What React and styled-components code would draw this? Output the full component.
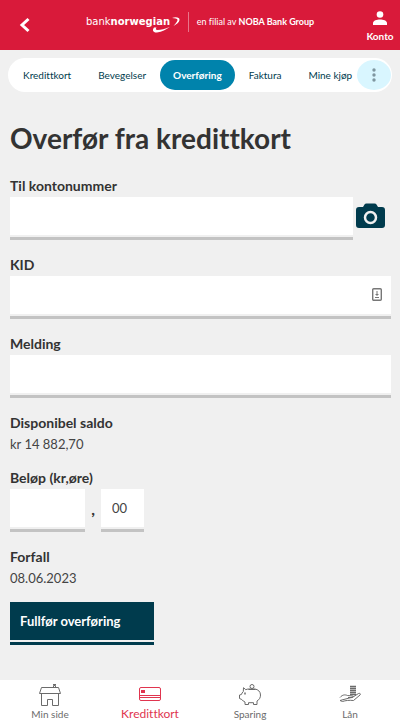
import React from "react";
import styled, { createGlobalStyle, ThemeProvider } from "styled-components";

const theme = {
  colorPrimary: "#d91a3a",
  colorNavy: "#003b4d",
  colorBlue: "#0083ac",
  colorLightBlue: "#d9f6ff",
  colorText: "#333333",
  colorGrey: "#c3c3c3",
  colorBackground: "#f0f0f0"
};

const GlobalStyle = createGlobalStyle`
  * {
    box-sizing: border-box;
  }
  body {
    margin: 0;
    background: ${theme.colorBackground};
    color: ${theme.colorText};
    font-family: Lato, "Noto Sans", sans-serif;
    font-variant-ligatures: none;
  }
  button,
  input {
    font-family: inherit;
    border: 0;
    border-radius: 0;
    margin: 0;
  }
`;

const Page = styled.div`
  min-height: 100vh;
  display: flex;
  flex-direction: column;
`;

const Header = styled.header`
  height: 50px;
  display: flex;
  align-items: center;
  justify-content: space-between;
  background: ${props => props.theme.colorPrimary};
  color: #fff;
`;

const BackButton = styled.button`
  width: 50px;
  height: 50px;
  padding: 0;
  display: flex;
  align-items: center;
  justify-content: center;
  background: none;
  color: inherit;
`;

const Brand = styled.a`
  display: flex;
  align-items: center;
  margin: 0 10px 6px 0;
  color: inherit;
  text-decoration: none;
`;

const Logo = styled.svg`
  display: block;
  width: 96px;
  height: 22px;
  font-family: "DejaVu Sans", sans-serif;
  font-size: 10px;
`;

const BrandNote = styled.span`
  padding: 4px 0 4px 8px;
  margin-left: 6px;
  border-left: 1px solid #e8758a;
  font-size: 9px;
  line-height: 12px;
  white-space: nowrap;
`;

const Account = styled.a`
  width: 40px;
  padding-top: 3px;
  display: flex;
  flex-direction: column;
  align-items: center;
  gap: 4px;
  color: inherit;
  font-size: 10px;
  font-weight: 700;
  line-height: 14px;
  text-decoration: none;
`;

const Tabs = styled.nav`
  margin: 8px 8px 0;
  padding: 2px 1px 2px 2px;
  display: flex;
  align-items: center;
  border-radius: 17px;
  background: #fff;
`;

const TabList = styled.div`
  flex: 1;
  min-width: 0;
  display: flex;
  gap: 1px;
  overflow: hidden;
`;

const Tab = styled.a`
  flex: none;
  height: 30px;
  padding: 0 13px;
  border-radius: 15px;
  background: ${props => (props.$active ? props.theme.colorBlue : "none")};
  color: ${props => (props.$active ? "#fff" : props.theme.colorNavy)};
  font-size: 10px;
  font-weight: ${props => (props.$active ? 700 : 400)};
  line-height: 30px;
  text-decoration: none;
  white-space: nowrap;
`;

const MoreButton = styled.button`
  flex: none;
  width: 34px;
  height: 30px;
  padding: 0;
  display: flex;
  align-items: center;
  justify-content: center;
  border-radius: 50%;
  background: ${props => props.theme.colorLightBlue};
  color: #7f96a0;
`;

const Content = styled.main`
  flex: 1;
  padding: 28px 9px 32px 10px;
`;

const Title = styled.h1`
  margin: 0 0 20px;
  font-size: 28px;
  font-weight: 700;
  line-height: 36px;
`;

const Field = styled.div`
  margin-bottom: ${props => (props.$compact ? "13px" : "15px")};
`;

const Label = styled.label`
  display: block;
  margin-bottom: 2px;
  font-size: 14px;
  font-weight: 700;
  line-height: 19px;
`;

const Value = styled.output`
  display: block;
  color: #444;
  font-size: 13px;
  line-height: 21px;
`;

const Row = styled.div`
  display: flex;
`;

const InputBox = styled.div`
  flex: ${props => (props.$width ? "none" : 1)};
  width: ${props => props.$width || "auto"};
  position: relative;
  padding-bottom: 2px;
  border-bottom: 3px solid ${props => props.theme.colorGrey};
`;

const Input = styled.input`
  display: block;
  width: 100%;
  height: 38px;
  padding: 0 11px;
  background: #fff;
  color: #444;
  font-size: 13px;
`;

const Autofill = styled.svg`
  position: absolute;
  right: 9px;
  top: 12px;
`;

const CameraButton = styled.button`
  width: 38px;
  padding: 6px 0 0 3px;
  display: flex;
  align-items: flex-start;
  background: none;
  color: ${props => props.theme.colorNavy};
`;

const Comma = styled.span`
  width: 16px;
  font-size: 16px;
  font-weight: 700;
  line-height: 40px;
  text-align: center;
`;

const SubmitFrame = styled.div`
  display: inline-block;
  padding-bottom: 2px;
  border-bottom: 3px solid ${props => props.theme.colorNavy};
`;

const Submit = styled.button`
  display: block;
  width: 144px;
  height: 38px;
  padding: 0 10px;
  background: ${props => props.theme.colorNavy};
  color: #fff;
  font-size: 13px;
  font-weight: 700;
  text-align: left;
`;

const BottomNav = styled.nav`
  height: 46px;
  display: grid;
  grid-template-columns: repeat(4, 1fr);
  background: #fff;
`;

const BottomLink = styled.a`
  padding-top: 3px;
  display: flex;
  flex-direction: column;
  align-items: center;
  color: ${props => (props.$active ? "#e0354f" : "#6b6b6b")};
  font-size: ${props => (props.$active ? "12px" : "10px")};
  line-height: 14px;
  text-decoration: none;

  svg {
    display: block;
  }
`;

const LineIcon = ({ children }) => (
  <svg
    width="24"
    height="24"
    viewBox="0 0 24 24"
    fill="none"
    stroke="currentColor"
    strokeLinejoin="round"
    aria-hidden="true"
  >
    {children}
  </svg>
);

const HouseIcon = () => (
  <LineIcon>
    <path d="M3.5 4.500H20.500L22.500 10.500H1.500ZM3.500 10.500V22.500H9.500V16.500H14.500V22.500H20.500V10.500M15.500 4.500V2.500H17.500V4.500" />
    <path d="M15 1.500H18" />
  </LineIcon>
);

const CardIcon = () => (
  <LineIcon>
    <rect x="1.500" y="4.500" width="21" height="13" rx="1.500" />
    <path d="M1.500 12.500H22.500M1.500 14.500H22.500" />
    <rect x="3" y="7" width="4" height="3" fill="currentColor" stroke="none" />
  </LineIcon>
);

const PigIcon = () => (
  <LineIcon>
    <path d="M11 6C9.500 6 8.700 6.200 7.800 6.700L5.500 4.700L5.300 8.500C4.200 9.500 3.700 10.500 3.400 11.500L1.500 12V15.500L3.800 16.500C4.500 17.700 5.800 18.500 7 19V21.500H10.500V19.700H15.500V21.500H19V18C21.500 16.500 22.500 14.500 22.500 12C22.500 8.500 20 6.500 17 6Z" />
    <path d="M10.500 6.500H17.500" />
    <circle cx="14" cy="3.500" r="2" />
    <path d="M7 9.500V11.500" strokeWidth="1.500" />
  </LineIcon>
);

const HandIcon = () => (
  <LineIcon>
    <path d="M2 14.500C4.500 11.500 7 11.500 9.500 12.500L14.500 13C15.500 13.500 15 14.500 14 14.600L10 14.500M15 14L20.500 10.500C22 10 23 11 22 12L15.500 17.500C11 17 7.500 17.500 4.500 18.500L2 17.500Z" />
    <path
      d="M12 5.500H18M12 7.500H18M12 9.500H18M12 11.500H18M12 3.500H18"
      strokeWidth="1.500"
    />
  </LineIcon>
);

const tabs = ["Kredittkort", "Bevegelser", "Overføring", "Faktura", "Mine kjøp"];

const sections = [
  { title: "Min side", Icon: HouseIcon },
  { title: "Kredittkort", Icon: CardIcon },
  { title: "Sparing", Icon: PigIcon },
  { title: "Lån", Icon: HandIcon }
];

const TextField = props => {
  const { id, label, icon, children } = props;
  return (
    <Field>
      <Label htmlFor={id}>{label}</Label>
      <Row>
        <InputBox>
          <Input id={id} type="text" />
          {icon}
        </InputBox>
        {children}
      </Row>
    </Field>
  );
};

const App = () => (
  <ThemeProvider theme={theme}>
    <GlobalStyle />
    <Page>
      <Header>
        <BackButton aria-label="Tilbake">
          <svg width="12" height="16" viewBox="0 0 12 16" fill="none">
            <path d="M9.500 2L3 8L9.500 14" stroke="currentColor" strokeWidth="3" />
          </svg>
        </BackButton>
        <Brand href="#">
          <Logo viewBox="0 0 96 22" fill="currentColor">
            <text x="0" y="14">
              bank<tspan fontWeight="700">norwegian</tspan>
            </text>
            <path d="M86 7C90 5.500 94 6.500 93.500 9C93 11.500 91 13 87.500 15C90 12 91.800 10 91.500 8.700C91.200 7.500 89 7.500 86 7Z" />
            <path d="M68 16.500C66 19 67 21.800 71 21.500C76 21 80 18.500 84 15.700C79 18 75 19 71.500 19C69.500 19 69.500 18 70.500 16.500Z" />
          </Logo>
          <BrandNote>
            en filial av <b>NOBA Bank Group</b>
          </BrandNote>
        </Brand>
        <Account href="#">
          <svg width="14" height="14" viewBox="0 0 14 14" fill="currentColor">
            <circle cx="7" cy="3.500" r="3.300" />
            <path d="M0 14V12C0 9.500 4 8.500 7 8.500S14 9.500 14 12V14Z" />
          </svg>
          Konto
        </Account>
      </Header>

      <Tabs>
        <TabList>
          {tabs.map(tab => (
            <Tab key={tab} href="#" $active={tab === "Overføring"}>
              {tab}
            </Tab>
          ))}
        </TabList>
        <MoreButton aria-label="Mer">
          <svg width="4" height="14" viewBox="0 0 4 14" fill="currentColor">
            <circle cx="2" cy="2" r="1.700" />
            <circle cx="2" cy="7" r="1.700" />
            <circle cx="2" cy="12" r="1.700" />
          </svg>
        </MoreButton>
      </Tabs>

      <Content>
        <Title>Overfør fra kredittkort</Title>
        <TextField id="account" label="Til kontonummer">
          <CameraButton aria-label="Skann faktura">
            <svg width="29" height="26" viewBox="0 0 29 26" fill="currentColor">
              <path d="M3 4H7L8.500 1.500Q9 0.500 10.500 0.500H18.500Q20 0.500 20.500 1.500L22 4H26Q29 4 29 7V22Q29 25 26 25H3Q0 25 0 22V7Q0 4 3 4Z" />
              <circle cx="14.500" cy="14.500" r="5.500" fill="none" stroke="#f0f0f0" strokeWidth="2.500" />
            </svg>
          </CameraButton>
        </TextField>
        <TextField
          id="kid"
          label="KID"
          icon={
            <Autofill width="10" height="13" viewBox="0 0 10 13" fill="none" stroke="#777">
              <rect x="0.700" y="0.700" width="8.600" height="11.600" rx="1" strokeWidth="1.400" />
              <path d="M5 3V8M3.500 6.500H6.500M3 9.500H7" />
            </Autofill>
          }
        />
        <TextField id="message" label="Melding" />
        <Field $compact>
          <Label htmlFor="balance">Disponibel saldo</Label>
          <Value id="balance">kr 14 882,70</Value>
        </Field>
        <Field>
          <Label htmlFor="kroner">Beløp (kr,øre)</Label>
          <Row>
            <InputBox $width="75px">
              <Input id="kroner" type="text" />
            </InputBox>
            <Comma>,</Comma>
            <InputBox $width="43px">
              <Input type="text" aria-label="Øre" defaultValue="00" />
            </InputBox>
          </Row>
        </Field>
        <Field $compact>
          <Label htmlFor="due">Forfall</Label>
          <Value id="due">08.06.2023</Value>
        </Field>
        <SubmitFrame>
          <Submit type="button">Fullfør overføring</Submit>
        </SubmitFrame>
      </Content>

      <BottomNav>
        {sections.map(({ title, Icon }) => (
          <BottomLink key={title} href="#" $active={title === "Kredittkort"}>
            <Icon />
            {title}
          </BottomLink>
        ))}
      </BottomNav>
    </Page>
  </ThemeProvider>
);

export default App;
